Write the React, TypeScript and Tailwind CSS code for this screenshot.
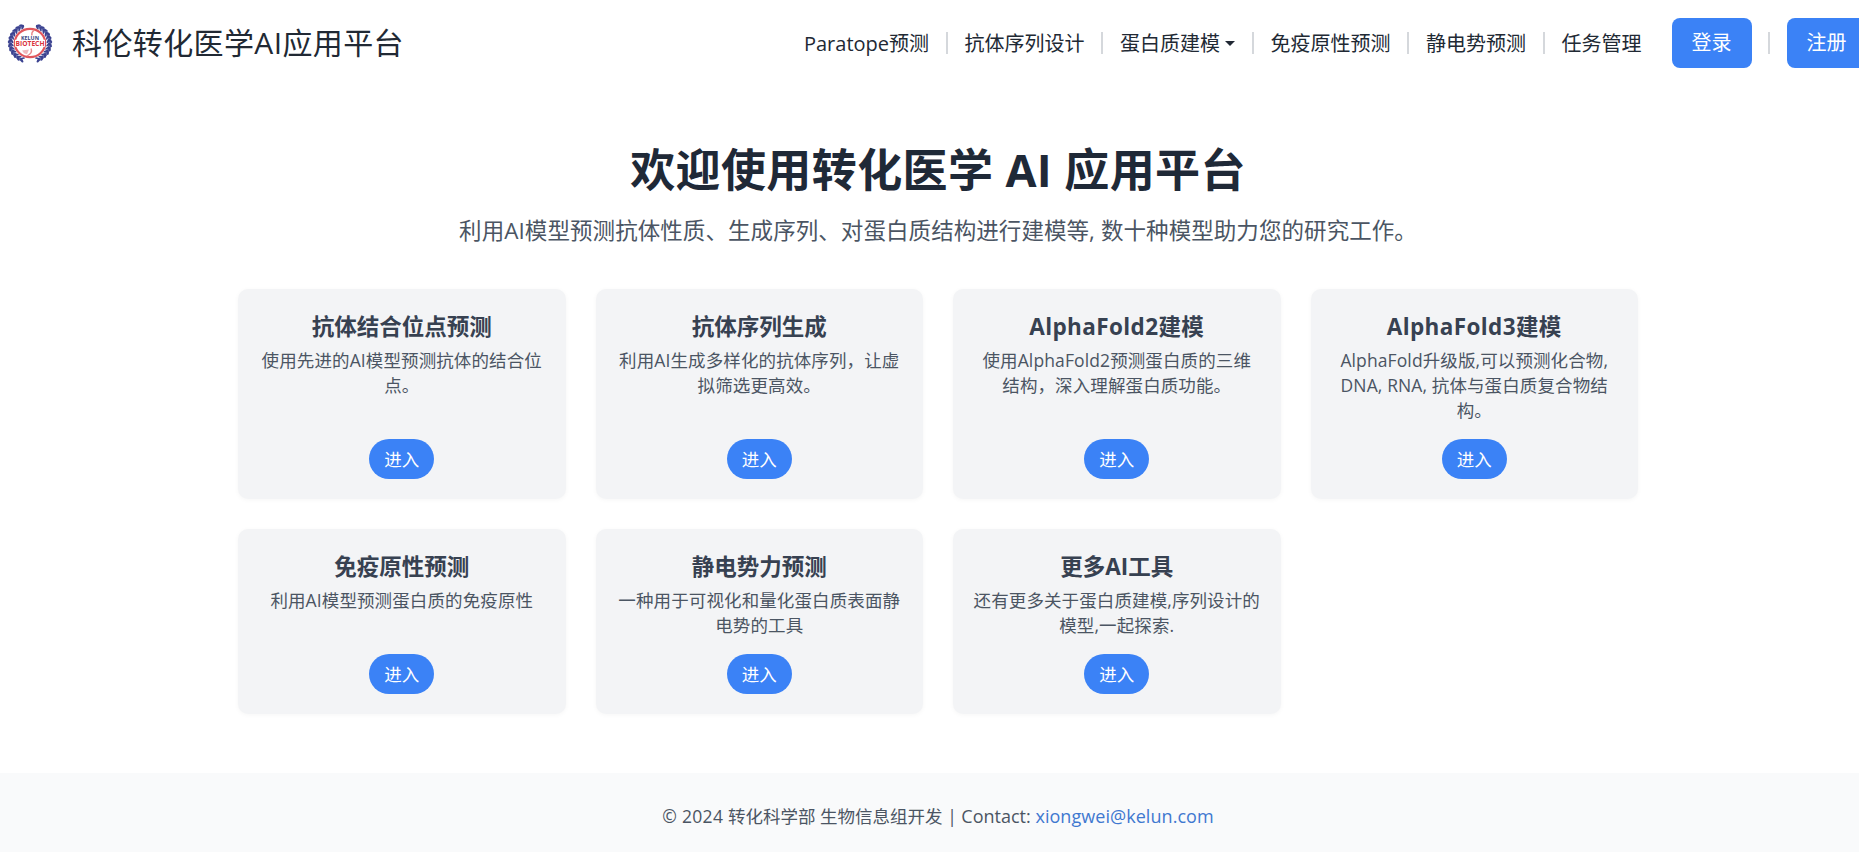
import type { ReactNode } from 'react';

const tools = [
  { title: '抗体结合位点预测', lines: ['使用先进的AI模型预测抗体的结合位', '点。'] },
  { title: '抗体序列生成', lines: ['利用AI生成多样化的抗体序列，让虚', '拟筛选更高效。'] },
  { title: 'AlphaFold2建模', latin: true, lines: ['使用AlphaFold2预测蛋白质的三维', '结构，深入理解蛋白质功能。'] },
  { title: 'AlphaFold3建模', latin: true, lines: ['AlphaFold升级版,可以预测化合物,', 'DNA, RNA, 抗体与蛋白质复合物结', '构。'] },
  { title: '免疫原性预测', lines: ['利用AI模型预测蛋白质的免疫原性'] },
  { title: '静电势力预测', lines: ['一种用于可视化和量化蛋白质表面静', '电势的工具'] },
  { title: '更多AI工具', lines: ['还有更多关于蛋白质建模,序列设计的', '模型,一起探索.'] },
];

const leaves = [-156, -144, -132, -120, -108, -96, -84, -72, -60, -48, -36, -24, 24, 36, 48, 60, 72, 84, 96, 108, 120, 132, 144, 156];

function Logo() {
  return (
    <svg className="h-10 w-[46px] shrink-0" viewBox="0 0 46 40">
      <g transform="translate(23 20) scale(1 0.93)">
        <path d="M-8 -18.3 A20 20 0 0 0 -8 18.3 M8 -18.3 A20 20 0 0 1 8 18.3" fill="none" stroke="#6a71ad" strokeWidth="3.2" />
        <g fill="#3b4290">
          {leaves.map((a) => (
            <g key={a} transform={`rotate(${a})`}>
              <ellipse cx="0" cy="-20.4" rx="2.6" ry="1.2" transform={`rotate(${a < 0 ? 35 : -35} 0 -20.4)`} />
              <ellipse cx="0" cy="-18" rx="2.3" ry="0.9" transform={`rotate(${a < 0 ? -35 : 35} 0 -18)`} />
            </g>
          ))}
        </g>
        <circle r="15.2" fill="#fff" stroke="#e0565c" strokeWidth="2.2" />
        <path d="M4 -14 Q1 -11 2 -8 M1 6 Q3 11 -3 14" fill="none" stroke="#e88a8d" strokeWidth="1.4" />
        <path d="M-8 8 L-1 7 L-3 12 L-6 11Z" fill="#efb9bd" />
        <rect x="-15" y="-3.5" width="30" height="7.5" fill="#fff" />
        <text y="-3.4" textAnchor="middle" fontSize="6" fontWeight="700" textLength="18" lengthAdjust="spacingAndGlyphs" fill="#35447f">KELUN</text>
        <text y="3.4" textAnchor="middle" fontSize="8" fontWeight="700" textLength="29" lengthAdjust="spacingAndGlyphs" fill="#d9333c">BIOTECH</text>
      </g>
    </svg>
  );
}

function Divider() {
  return <span className="h-[22px] w-[2px] shrink-0 bg-[#d5d8dc]" />;
}

function NavItem({ width, children }: { width: string; children: ReactNode }) {
  return (
    <a href="#" className={`flex shrink-0 items-center justify-center whitespace-nowrap pt-px ${width}`}>
      {children}
    </a>
  );
}

export default function App() {
  return (
    <div className="h-[852px] w-full overflow-hidden bg-white font-['Open_Sans','Noto_Sans_CJK_SC',sans-serif]">
      <div className="flex h-full w-[1876px] flex-col">
        <header className="flex h-[86px] shrink-0 items-center pl-[7px] text-[#212934]">
          <Logo />
          <span className="ml-[19px] whitespace-nowrap text-[30px] leading-[44px] tracking-[0.38px]">科伦转化医学AI应用平台</span>
          <nav className="ml-auto flex items-center text-[20px] leading-[30px]">
            <NavItem width="w-[159px]">Paratope预测</NavItem>
            <Divider />
            <NavItem width="w-[153px]">抗体序列设计</NavItem>
            <Divider />
            <NavItem width="w-[149px]">
              蛋白质建模
              <svg className="ml-[5px] h-[5px] w-[10px]" viewBox="0 0 10 5">
                <path d="M0 0H10L5 5Z" fill="currentColor" />
              </svg>
            </NavItem>
            <Divider />
            <NavItem width="w-[153px]">免疫原性预测</NavItem>
            <Divider />
            <NavItem width="w-[134px]">静电势预测</NavItem>
            <Divider />
            <NavItem width="w-[113px]">任务管理</NavItem>
            <button className="ml-[14px] h-[50px] w-[80px] rounded-lg bg-[#3b82f6] pr-px text-white">登录</button>
            <span className="ml-4" />
            <Divider />
            <button className="mr-[9px] ml-[17px] h-[50px] w-[80px] rounded-lg bg-[#3b82f6] pr-px text-white">注册</button>
          </nav>
        </header>

        <main className="mx-auto flex w-[1400px] flex-1 flex-col items-center pt-[54px]">
          <h1 className="whitespace-nowrap text-[45px] leading-[60px] font-bold tracking-[0.4px] text-[#1f2937]">欢迎使用转化医学 AI 应用平台</h1>
          <p className="mt-[14px] whitespace-nowrap text-[22.5px] leading-[34px] tracking-[0.07px] text-[#4b5563]">
            利用AI模型预测抗体性质、生成序列、对蛋白质结构进行建模等, 数十种模型助力您的研究工作。
          </p>
          <div className="mt-10 grid w-full grid-cols-4 gap-[30px] pt-px">
            {tools.map((tool) => (
              <section key={tool.title} className="flex flex-col items-center rounded-[10px] bg-[#f3f4f6] py-5 shadow-[0_1px_5px_rgba(0,0,0,0.04)]">
                <h2 className={`h-[36px] whitespace-nowrap text-[22.5px] leading-[36px] font-bold text-[#374151] ${tool.latin ? 'tracking-[0.38px]' : ''}`}>{tool.title}</h2>
                <p className="mt-[3px] mb-4 text-center text-[17.5px] leading-[25px] tracking-[0.11px] text-[#4b5563]">
                  {tool.lines.map((line) => (
                    <span key={line} className="block whitespace-nowrap">{line}</span>
                  ))}
                </p>
                <button className="mt-auto h-10 w-[65px] rounded-full bg-[#3b82f6] text-[17.5px] leading-[26px] text-white">进入</button>
              </section>
            ))}
          </div>
        </main>

        <footer className="flex h-[79px] shrink-0 items-center justify-center bg-[#f9fafb] pt-[6px] text-[17.5px] text-[#4b5563]">
          <p className="whitespace-nowrap leading-[26px]">
            <span className="tracking-[0.3px]">© 2024 </span>转化科学部 生物信息组开发 | <span className="text-[18px]">Contact: </span>
            <a href="#" className="text-[18px] tracking-[0.05px] text-[#3f78d0]">xiongwei@kelun.com</a>
          </p>
        </footer>
      </div>
    </div>
  );
}
